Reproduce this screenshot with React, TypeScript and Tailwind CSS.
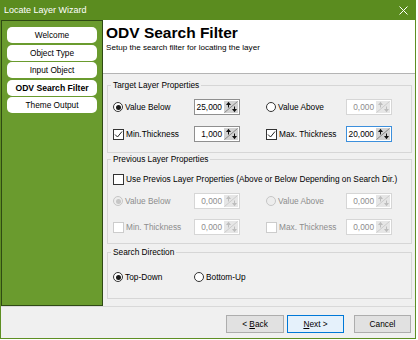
import React from 'react';

const BODY = "font-['Liberation_Sans',Arial,sans-serif]";

function SpinIcon({ disabled }: { disabled?: boolean }) {
  const c = disabled ? '#bdbdbd' : '#111111';
  return (
    <svg width="14" height="12" viewBox="0 0 14 12" className="shrink-0">
      <rect x="0" y="0" width="14" height="12" fill={disabled ? '#e6e6e6' : '#d2d2d2'} />
      <line x1="0.5" y1="11.5" x2="13.5" y2="0.5" stroke={disabled ? '#cdcdcd' : '#8a8a8a'} />
      <path d="M2 4 L4.5 0.8 L7 4 Z" fill={c} />
      <rect x="4" y="3.5" width="1" height="3" fill={c} />
      <path d="M8 8 L10.5 11.2 L13 8 Z" fill={c} />
      <rect x="10" y="5.5" width="1" height="3" fill={c} />
    </svg>
  );
}

function Spin({ value, disabled, focused }: { value: string; disabled?: boolean; focused?: boolean }) {
  const border = focused ? 'border-[#3c8fdc]' : disabled ? 'border-[#d6d6d6]' : 'border-[#8f8f8f]';
  return (
    <div className={`w-[46px] h-[16px] shrink-0 border ${border} bg-white flex items-center justify-end gap-[2px] pr-[1px]`}>
      <span className={`leading-[10px] ${disabled ? 'text-[#8d8d8d]' : 'text-black'}`}>{value}</span>
      <SpinIcon disabled={disabled} />
    </div>
  );
}

function Radio({ checked, disabled }: { checked?: boolean; disabled?: boolean }) {
  return (
    <span
      className={`w-[10px] h-[10px] shrink-0 rounded-full border flex items-center justify-center ${
        disabled ? 'border-[#c6c6c6] bg-[#ededed]' : 'border-[#333333] bg-white'
      }`}
    >
      {checked && <span className={`w-[5px] h-[5px] rounded-full ${disabled ? 'bg-[#c6c6c6]' : 'bg-[#1a1a1a]'}`} />}
    </span>
  );
}

function Check({ checked, disabled }: { checked?: boolean; disabled?: boolean }) {
  return (
    <span
      className={`w-[11px] h-[11px] shrink-0 border flex items-center justify-center bg-white ${
        disabled ? 'border-[#cccccc]' : 'border-[#333333]'
      }`}
    >
      {checked && (
        <svg width="9" height="9" viewBox="0 0 9 9">
          <path d="M1 4.5 L3.5 7 L8 1.5" fill="none" stroke="#222" strokeWidth="1" />
        </svg>
      )}
    </span>
  );
}

function Label({ children, disabled }: { children: React.ReactNode; disabled?: boolean }) {
  return <span className={`leading-[10px] whitespace-nowrap ${disabled ? 'text-[#8d8d8d]' : 'text-black'}`}>{children}</span>;
}

type Cell = {
  kind: 'radio' | 'check';
  label: string;
  checked?: boolean;
  disabled?: boolean;
  value: string;
  focused?: boolean;
  spinOff?: boolean;
};

function Row({ left, right }: { left: Cell; right: Cell }) {
  const cell = (c: Cell, w: string) => (
    <div className={`${w} flex items-center gap-[2px] shrink-0`}>
      {c.kind === 'radio' ? <Radio checked={c.checked} disabled={c.disabled} /> : <Check checked={c.checked} disabled={c.disabled} />}
      <Label disabled={c.disabled}>{c.label}</Label>
    </div>
  );
  return (
    <div className="flex items-center h-[16px]">
      {cell(left, 'w-[81px]')}
      <Spin value={left.value} disabled={left.disabled || left.spinOff} focused={left.focused} />
      <div className="w-[26px] shrink-0" />
      {cell(right, 'w-[80px]')}
      <Spin value={right.value} disabled={right.disabled || right.spinOff} focused={right.focused} />
    </div>
  );
}

function Group({ title, className, children }: { title: string; className: string; children: React.ReactNode }) {
  return (
    <fieldset className={`border border-[#d6d6d6] mx-0 pl-[5px] pr-0 ${className}`}>
      <legend className="ml-[-2px] px-[2px] leading-[10px] text-black">{title}</legend>
      {children}
    </fieldset>
  );
}

const steps = ['Welcome', 'Object Type', 'Input Object', 'ODV Search Filter', 'Theme Output'];

export default function App() {
  return (
    <div className={`w-[418px] h-[340px] bg-white ${BODY} text-[8.3px]`}>
      <div className="w-[416px] h-[339px] border-x border-b border-[#5e8f23] flex flex-col bg-[#f0f0f0]">
        {/* title bar */}
        <div className="h-[20px] -mx-px bg-[#5b8c1f] flex items-center justify-between pl-[4px] pr-[8px] shrink-0">
          <span className="text-white text-[9px] leading-[12px]">Locate Layer Wizard</span>
          <svg width="9" height="9" viewBox="0 0 9 9">
            <path d="M0.5 0.5 L8.5 8.5 M8.5 0.5 L0.5 8.5" stroke="#ffffff" strokeWidth="1" />
          </svg>
        </div>

        <div className="flex h-[286px] shrink-0">
          {/* step list */}
          <div className="w-[102px] shrink-0 bg-[#6a9b2e] border border-[#2f4a14] px-[5px] pt-[6px] flex flex-col gap-[1.5px]">
            {steps.map((s) => (
              <div
                key={s}
                className={`h-[16px] rounded-[5px] bg-white flex items-center justify-center leading-[10px] text-black ${
                  s === 'ODV Search Filter' ? 'font-bold text-[8.6px]' : ''
                }`}
              >
                {s}
              </div>
            ))}
          </div>

          {/* page */}
          <div className="flex-1 flex flex-col">
            <div className="h-[54px] bg-white border-b border-[#b4b4b4] pl-[3px] pt-[4px] shrink-0">
              <div className="font-bold text-[15.5px] leading-[18px] text-black">ODV Search Filter</div>
              <div className="text-[8.1px] leading-[11px] text-black">Setup the search filter for locating the layer</div>
            </div>

            <div className="flex flex-col pl-[4px] pr-[3px] pt-[6px]">
              <Group title="Target Layer Properties" className="pt-[9px] pb-[10px]">
                <div className="flex flex-col gap-[11px]">
                  <Row
                    left={{ kind: 'radio', label: 'Value Below', checked: true, value: '25,000' }}
                    right={{ kind: 'radio', label: 'Value Above', value: '0,000', spinOff: true }}
                  />
                  <Row
                    left={{ kind: 'check', label: 'Min.Thickness', checked: true, value: '1,000' }}
                    right={{ kind: 'check', label: 'Max. Thickness', checked: true, value: '20,000', focused: true }}
                  />
                </div>
              </Group>

              <Group title="Previous Layer Properties" className="mt-[1px] pt-[7px] pb-[8px]">
                <div className="flex items-center h-[16px] gap-[2px]">
                  <Check />
                  <Label>Use Previos Layer Properties (Above or Below Depending on Search Dir.)</Label>
                </div>
                <div className="flex flex-col gap-[10px] mt-[6px]">
                  <Row
                    left={{ kind: 'radio', label: 'Value Below', checked: true, disabled: true, value: '0,000' }}
                    right={{ kind: 'radio', label: 'Value Above', disabled: true, value: '0,000' }}
                  />
                  <Row
                    left={{ kind: 'check', label: 'Min. Thickness', disabled: true, value: '0,000' }}
                    right={{ kind: 'check', label: 'Max. Thickness', disabled: true, value: '0,000' }}
                  />
                </div>
              </Group>

              <Group title="Search Direction" className="mt-[3px] pt-[12px] pb-[13px]">
                <div className="flex items-center h-[16px]">
                  <div className="w-[81px] flex items-center gap-[2px]">
                    <Radio checked />
                    <Label>Top-Down</Label>
                  </div>
                  <div className="flex items-center gap-[2px]">
                    <Radio />
                    <Label>Bottom-Up</Label>
                  </div>
                </div>
              </Group>
            </div>
          </div>
        </div>

        {/* button bar */}
        <div className="flex-1 border-t border-[#d9d9d9] flex justify-end items-start pt-[8px] pr-[4px]">
          <button className="w-[58px] h-[18px] border border-[#adadad] bg-[#e1e1e1] text-black leading-[10px]">
            &lt; <span className="underline">B</span>ack
          </button>
          <button className="ml-[3px] w-[57px] h-[18px] border border-[#0078d7] bg-[#e5f1fb] text-black leading-[10px]">
            <span className="underline">N</span>ext &gt;
          </button>
          <button className="ml-[10px] w-[57px] h-[18px] border border-[#adadad] bg-[#e1e1e1] text-black leading-[10px]">
            Cancel
          </button>
        </div>
      </div>
    </div>
  );
}
